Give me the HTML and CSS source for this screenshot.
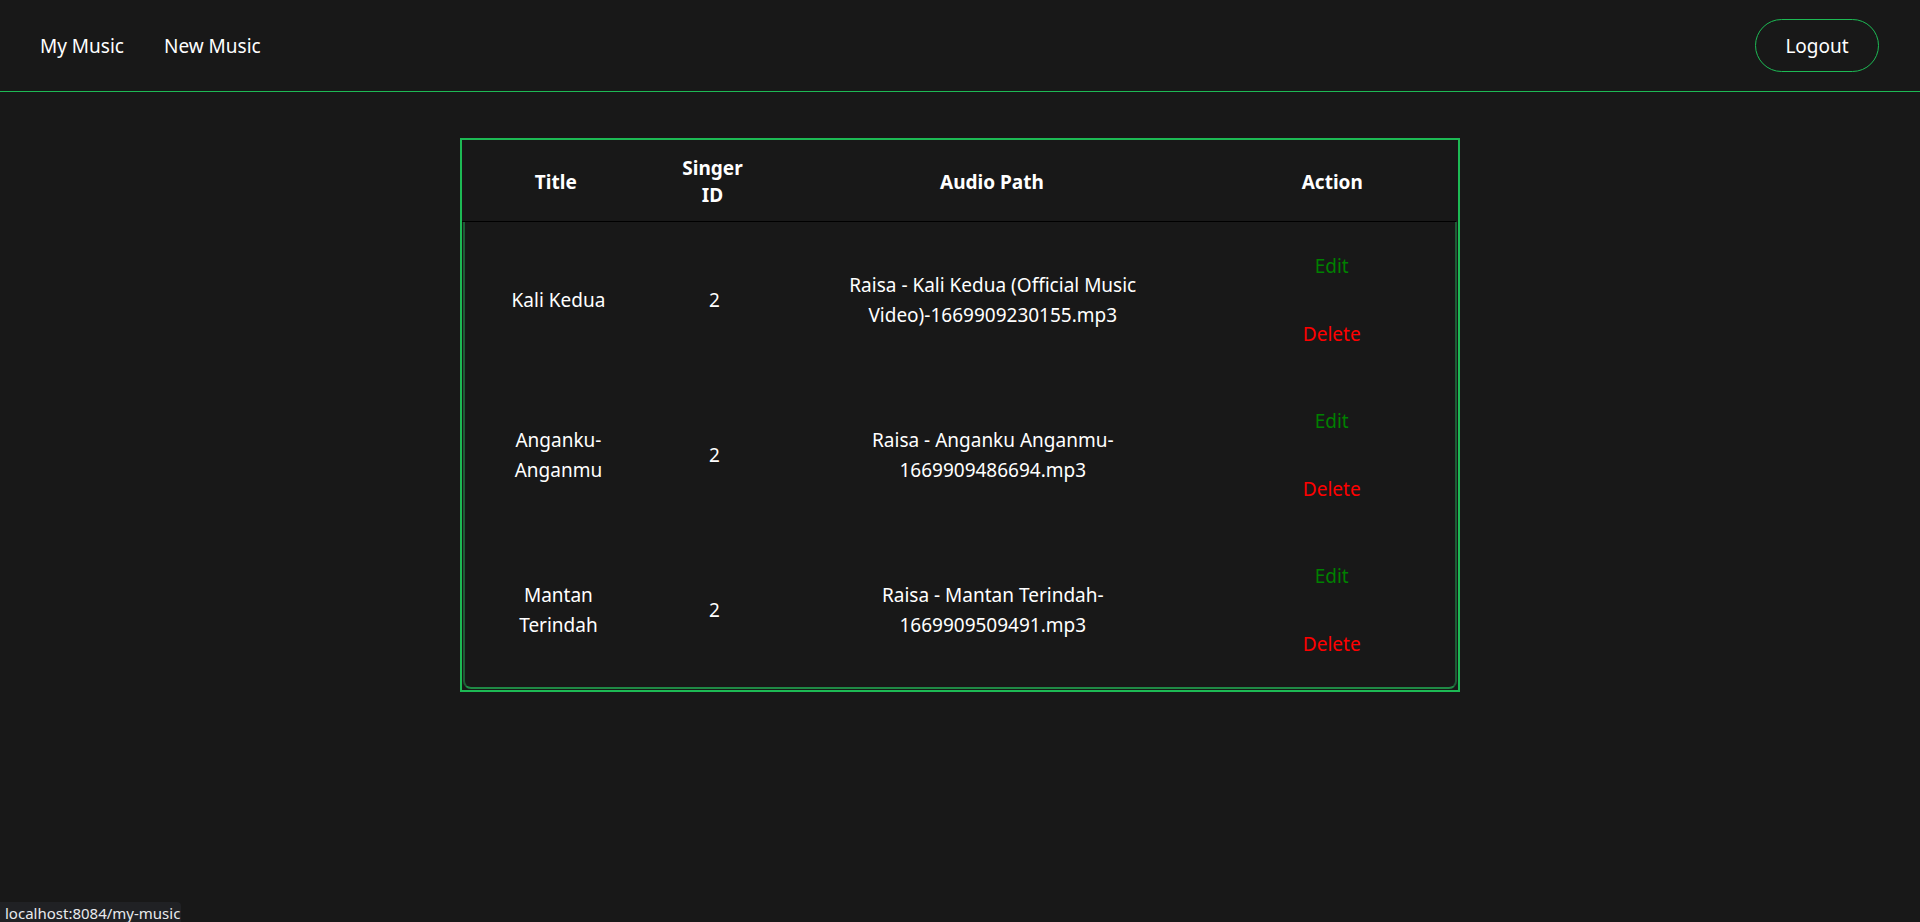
FILE: index.html
```html
<!DOCTYPE html>
<html lang="en">
<head>
<meta charset="utf-8">
<title>My Music</title>
<link rel="stylesheet" href="styles.css">
</head>
<body>
<nav class="nav">
  <div class="nav-links">
    <a class="nav-link" href="#">My Music</a>
    <a class="nav-link" href="#">New Music</a>
  </div>
  <button class="logout">Logout</button>
</nav>
<main class="main">
  <div class="table-wrap">
    <div class="head">
      <div class="hcell">Title</div>
      <div class="hcell"><span class="singer">Singer ID</span></div>
      <div class="hcell">Audio Path</div>
      <div class="hcell">Action</div>
    </div>
    <div class="body">
      <div class="row">
        <div class="cell"><span class="title">Kali Kedua</span></div>
        <div class="cell">2</div>
        <div class="cell"><span class="path">Raisa - Kali Kedua (Official Music Video)-1669909230155.mp3</span></div>
        <div class="cell actions"><a class="edit" href="#">Edit</a><a class="delete" href="#">Delete</a></div>
      </div>
      <div class="row">
        <div class="cell"><span class="title">Anganku-Anganmu</span></div>
        <div class="cell">2</div>
        <div class="cell"><span class="path">Raisa - Anganku Anganmu-1669909486694.mp3</span></div>
        <div class="cell actions"><a class="edit" href="#">Edit</a><a class="delete" href="#">Delete</a></div>
      </div>
      <div class="row">
        <div class="cell"><span class="title">Mantan Terindah</span></div>
        <div class="cell">2</div>
        <div class="cell"><span class="path">Raisa - Mantan Terindah-1669909509491.mp3</span></div>
        <div class="cell actions"><a class="edit" href="#">Edit</a><a class="delete" href="#">Delete</a></div>
      </div>
    </div>
  </div>
</main>
<div class="status">localhost:8084/my-music</div>
</body>
</html>
```
FILE: styles.css
```css
* { box-sizing: border-box; }
html, body { margin: 0; padding: 0; }
body {
  background: #181818;
  color: #ffffff;
  font-family: "Noto Sans", "Open Sans", sans-serif;
  font-size: 19px;
  line-height: 30px;
  height: 922px;
  overflow: hidden;
}
.nav {
  height: 92px;
  border-bottom: 1px solid #1db954;
  display: flex;
  align-items: center;
  justify-content: space-between;
  padding: 0 41px 0 40px;
}
.nav-links { display: flex; gap: 40px; }
.nav-link {
  color: #ffffff;
  text-decoration: none;
  font-size: 19px;
}
.logout {
  height: 53px;
  width: 124px;
  background: transparent;
  color: #ffffff;
  border: 1px solid #1db954;
  border-radius: 27px;
  font-family: inherit;
  font-size: 19px;
  padding: 0;
}
.main {
  display: flex;
  justify-content: center;
  padding-top: 46px;
}
.table-wrap {
  width: 1000px;
  border: 2px solid #1db954;
  padding-bottom: 1px;
}
.head, .row {
  display: grid;
  grid-template-columns: 188fr 126fr 434fr 248fr;
}
.head {
  height: 82px;
  padding-top: 3px;
  border-bottom: 1px solid #000000;
  margin-right: 2px;
  align-items: center;
}
.hcell {
  font-weight: 700;
  text-align: center;
  line-height: 27px;
}
.singer { display: inline-block; max-width: 70px; }
.body {
  margin: 0 1px;
  border: 2px solid #1d5e36;
  border-top: 0;
  border-bottom-color: #1f8a45;
  border-radius: 0 0 8px 8px;
}
.row { height: 155px; align-items: center; }
.cell { text-align: center; }
.title { display: inline-block; max-width: 125px; }
.path { display: inline-block; max-width: 320px; }
.actions {
  display: flex;
  flex-direction: column;
  align-items: center;
  gap: 38px;
}
.edit { color: #008000; text-decoration: none; }
.delete { color: #ff0000; text-decoration: none; }
.status {
  position: absolute;
  left: 0;
  bottom: 0;
  width: 181px;
  height: 20px;
  background: #202124;
  color: #e8eaed;
  font-size: 15px;
  line-height: 22px;
  padding-left: 5px;
  border-top-right-radius: 4px;
  white-space: nowrap;
  overflow: hidden;
}
```
